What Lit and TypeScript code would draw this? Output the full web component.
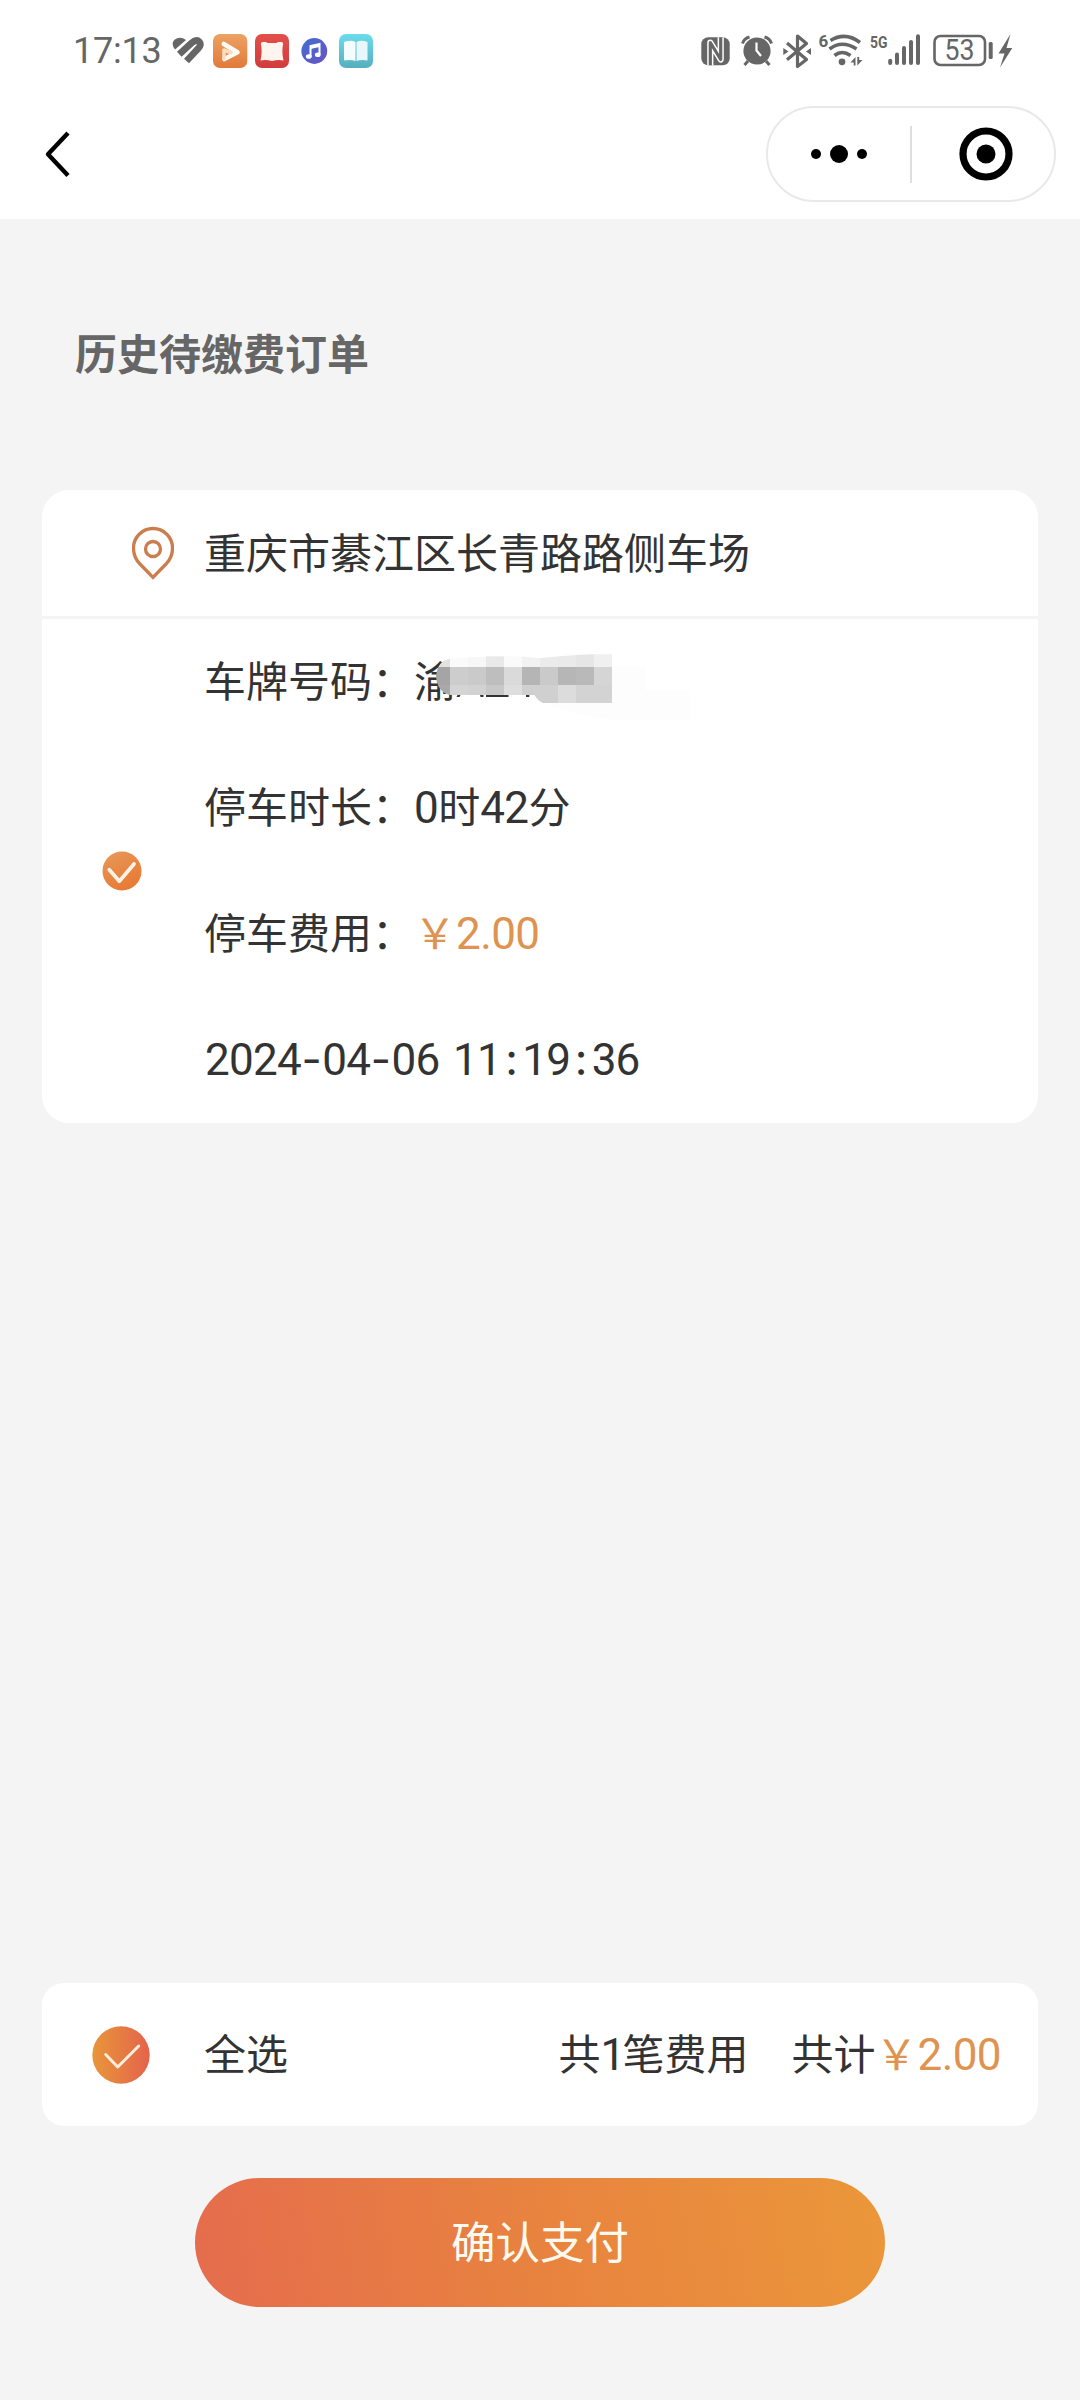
import { LitElement, html, svg, css } from "lit";
import { customElement, property } from "lit/decorators.js";

const MOSAIC = [
  ["#e2e2e2", "#fafafa", "#f7f7f7", "#e9e9e9", "#fafafa", "#f2f2f2", "#ebebeb", "#eaeaea", "#e6e6e6", "#f0f0f0"],
  ["#a5a5a5", "#cdcdcd", "#cacaca", "#bebebe", "#dadada", "#b5b5b5", "#cacaca", "#b6b6b6", "#b9b9b9", "#d5d5d5"],
  ["#a9a9a9", "#d4d4d4", "#d2d2d2", "#c8c8c8", "#dedede", "#d0d0d0", "#d0d0d0", "#dcdcdc", "#d3d3d3", "#d3d3d3"],
];

@customElement("status-bar")
class StatusBar extends LitElement {
  static styles = css`
    :host { display: flex; height: 100px; box-sizing: border-box; padding: 2px 64px 0 73px; align-items: center; justify-content: space-between; color: #666; }
    .side { display: flex; align-items: center; }
    .time { font: 400 36px/36px Roboto, sans-serif; width: 97px; white-space: nowrap; letter-spacing: -0.2px; }
    .num { font: 400 29px Roboto, sans-serif; }
    .mini { font: 700 17px "Liberation Sans Narrow", Roboto, sans-serif; }
    svg { display: block; }
  `;
  render() {
    return html`
      <div class="side">
        <span class="time">17:13</span>
        <svg width="204" height="40" viewBox="170 31 204 40">
          <defs>
            <linearGradient id="o" x2="0" y2="1"><stop stop-color="#eca264" /><stop offset="1" stop-color="#e27a38" /></linearGradient>
            <linearGradient id="r" x2="0" y2="1"><stop stop-color="#e2504c" /><stop offset="1" stop-color="#d23b3a" /></linearGradient>
            <linearGradient id="m" x2="1" y2="1"><stop stop-color="#3f6fd0" /><stop offset="1" stop-color="#6a52c4" /></linearGradient>
            <linearGradient id="c" x2="0" y2="1"><stop stop-color="#6bdcec" /><stop offset="1" stop-color="#56afc0" /></linearGradient>
          </defs>
          <path d="M175 49.500Q170.500 43.500 174.500 39.800Q180 35.500 186 40Z" fill="#666" />
          <path d="M179.300 54.300L191.500 43Q196.500 38.800 199.300 41.800Q202 45 197.800 49L186.500 61" fill="none" stroke="#666" stroke-width="6.800" />
          <rect x="213" y="34" width="34.300" height="34" rx="7" fill="url(#o)" />
          <path d="M223.800 44L237.500 52.200L224.300 59" fill="none" stroke="#fffaf4" stroke-width="4.600" stroke-linejoin="round" stroke-linecap="round" />
          <path d="M224 58.500V50L230.500 52.500" fill="none" stroke="#fbdcc0" stroke-width="3.600" stroke-linejoin="round" stroke-linecap="round" />
          <rect x="255" y="34" width="34" height="34" rx="7" fill="url(#r)" />
          <path d="M261 44.500Q260.500 42 263 42H266L267.500 43H276.500L278 42H281Q283.500 42 283 44.500Q281.500 52 283.500 60.500Q278 59.500 272 61Q266 59.500 260.500 60.500Q262.500 52 261 44.500Z" fill="#fff4ee" />
          <circle cx="314.300" cy="51" r="12.900" fill="url(#m)" />
          <path d="M310.500 56.500V46L319.500 44V54.500" fill="none" stroke="#fff" stroke-width="2" />
          <path d="M310.500 46L319.500 44V47L310.500 49Z" fill="#fff" />
          <ellipse cx="308.800" cy="56.500" rx="2.900" ry="2.300" fill="#fff" /><ellipse cx="317.800" cy="54.800" rx="2.900" ry="2.300" fill="#fff" />
          <rect x="339" y="34" width="34" height="34" rx="7" fill="url(#c)" />
          <path d="M344 42Q351 39.500 355.500 42V61Q351 59.500 344 60.500Z" fill="#f4fcfd" />
          <path d="M367.500 42Q361 39.500 356.500 42V61Q361 59.500 367.500 60.500Z" fill="#e8f8fa" />
        </svg>
      </div>
      <svg width="316" height="40" viewBox="700 31 316 40" fill="#666">
        <rect x="701.300" y="37.200" width="28.400" height="28" rx="7" />
        <path d="M710.300 65.200V42.500L720.700 59.500V37.200" fill="none" stroke="#fff" stroke-width="6.200" stroke-linejoin="round" />
        <path d="M710.300 65.200V42.500L720.700 59.500V37.200" fill="none" stroke="#666" stroke-width="3.200" stroke-linejoin="round" />
        <circle cx="757" cy="51" r="13.600" />
        <path d="M742.500 43.500Q744 38.500 749.500 37M771.500 43.500Q770 38.500 764.500 37M748 61L744.500 65M766 61L769.500 65" fill="none" stroke="#666" stroke-width="3" />
        <path d="M756.500 42.500V50.500L761 56" fill="none" stroke="#fff" stroke-width="2.200" />
        <path d="M787 43L806.500 59.500L797.500 66.500V36L806.500 43.500L787 59.800" fill="none" stroke="#666" stroke-width="3.200" stroke-linejoin="round" />
        <path d="M783.300 48L788.500 51.500L783.300 55ZM811 48L806 51.500L811 55Z" />
        <text class="mini" x="818.500" y="47">6</text>
        <path d="M830.500 40.500Q845.500 31.500 860 42.500M829.500 49Q842 39.500 856.500 49M834.500 55.500Q842 49.500 850.500 55.500" fill="none" stroke="#666" stroke-width="3.600" />
        <circle cx="842" cy="61.800" r="3.400" />
        <path d="M850.500 62.500L855.500 57V65.500H853.700V62.500ZM857.300 57V65.500L862.500 60H859.200V57Z" />
        <text class="mini" x="870" y="48" textLength="17.500" lengthAdjust="spacingAndGlyphs">5G</text>
        <rect x="888.200" y="58.800" width="4" height="6.200" rx="2" /><rect x="895" y="52.500" width="4" height="12.500" rx="2" /><rect x="902" y="46" width="4" height="19" rx="2" /><rect x="909" y="40" width="4" height="25" rx="2" /><rect x="916" y="34.300" width="4" height="30.700" rx="2" />
        <rect x="934.500" y="36" width="50.500" height="29" rx="6" fill="none" stroke="#666" stroke-width="2.600" />
        <text class="num" x="944.500" y="60.300" textLength="30" lengthAdjust="spacingAndGlyphs">53</text>
        <rect x="988.700" y="42" width="4" height="17" rx="1.500" />
        <path d="M1010.500 34L998.500 53.500H1004.500L1000 67.500L1012.300 48H1006.500Z" />
      </svg>
    `;
  }
}

@customElement("nav-header")
class NavHeader extends LitElement {
  static styles = css`
    :host { display: flex; height: 119px; box-sizing: border-box; padding: 6px 24px 17px 44px; align-items: center; justify-content: space-between; }
    .capsule { display: flex; width: 290px; height: 96px; box-sizing: border-box; border: 2px solid #e9e9e9; border-radius: 48px; align-items: center; }
    .half { display: flex; box-sizing: border-box; justify-content: center; align-items: center; }
    .dots { gap: 9px; width: 142px; }
    .ring { width: 142px; padding-left: 5px; }
    .dot { width: 10px; height: 10px; border-radius: 50%; background: #000; }
    .dot.big { width: 18px; height: 18px; }
    .sep { width: 2px; height: 57px; background: #dedede; }
    svg { display: block; }
  `;
  render() {
    return html`
      <svg width="26" height="48" viewBox="44 130 26 48"><path d="M68 133L48 154.300L68 175.500" fill="none" stroke="#000" stroke-width="4.400" stroke-linejoin="round" /></svg>
      <div class="capsule">
        <div class="half dots"><span class="dot"></span><span class="dot big"></span><span class="dot"></span></div>
        <div class="sep"></div>
        <div class="half ring">
          <svg width="54" height="54"><circle cx="27" cy="27" r="23" fill="none" stroke="#000" stroke-width="7.200" /><circle cx="27" cy="27" r="9.500" /></svg>
        </div>
      </div>
    `;
  }
}

@customElement("round-check")
class RoundCheck extends LitElement {
  @property({ type: Boolean }) large = false;
  static styles = css`
    :host { display: block; }
    svg { display: block; }
  `;
  render() {
    return this.large
      ? html`<svg width="58" height="58">
          <defs><linearGradient id="g"><stop stop-color="#e8963a" /><stop offset="1" stop-color="#e4634c" /></linearGradient></defs>
          <circle cx="29" cy="29" r="28.700" fill="url(#g)" />
          <path d="M13.700 28.500L25.700 41L46.700 20" fill="none" stroke="#fdeedd" stroke-width="3" stroke-linecap="round" stroke-linejoin="round" />
        </svg>`
      : html`<svg width="40" height="40">
          <defs><linearGradient id="g" x2=".5" y2="1"><stop stop-color="#e69a5a" /><stop offset="1" stop-color="#e97a36" /></linearGradient></defs>
          <circle cx="20" cy="20" r="19.500" fill="url(#g)" />
          <path d="M7.300 18.700L17.300 30.200L32 13" fill="none" stroke="#fef3e4" stroke-width="3.700" stroke-linecap="round" stroke-linejoin="round" />
        </svg>`;
  }
}

@customElement("app-root")
class AppRoot extends LitElement {
  static styles = css`
    :host { display: flex; flex-direction: column; width: 1080px; height: 2400px; background: #f4f4f4; color: #333; font: 400 42px/1 "Noto Sans CJK SC", sans-serif; }
    .top { background: #fff; }
    .title { margin: 77px 75px 0; font-size: 42px; line-height: 112px; font-weight: 700; color: #666; }
    .card { margin: 82px 42px 0; background: #fff; border-radius: 27px; }
    .place { display: flex; height: 126px; align-items: center; border-bottom: 3px solid #f4f4f4; }
    .place span { padding-bottom: 5px; }
    .pin { display: block; width: 42px; margin: 0 30px 0 90px; }
    .body { display: flex; align-items: center; height: 504px; }
    .body round-check { margin: 0 62px 0 60px; }
    .row { display: flex; height: 126px; box-sizing: border-box; padding-bottom: 6px; align-items: center; white-space: nowrap; line-height: 62px; }
    .row.when { padding-bottom: 1px; }
    .n { font-family: Roboto, sans-serif; font-size: 44px; letter-spacing: -0.6px; line-height: 1; }
    .one { margin-right: -2px; }
    .fee { color: #de9350; }
    .date { word-spacing: 3.500px; letter-spacing: -0.75px; padding-left: 1px; }
    .s { display: inline-block; width: 21.300px; text-align: center; font-family: Inter, sans-serif; letter-spacing: 0; font-size: 44px; }
    .plate { position: relative; }
    .mask { position: absolute; left: 16px; top: 3px; }
    .grow { flex: 1; }
    .total { display: flex; align-items: center; height: 143px; margin: 0 42px; background: #fff; border-radius: 22px; line-height: 62px; white-space: nowrap; }
    .total span { padding-bottom: 5px; }
    .total round-check { margin: 0 54px 0 50px; }
    .total .sum { margin-left: 43px; margin-right: 37px; }
    .pay { align-self: center; width: 690px; height: 129px; margin: 52px 0 93px; padding: 0 0 6px; border: 0; border-radius: 65px; background: linear-gradient(80deg, #e56c4d, #e8833f 50%, #eb973a); color: #fffaf0; font: 400 44.500px/123px "Noto Sans CJK SC", sans-serif; }
  `;
  mosaic() {
    return html`<svg class="mask" width="260" height="70" viewBox="430 650 260 70">
      <defs><clipPath id="shape"><path d="M436 675Q438 659 450 658Q490 653 540 657Q575 654 590 653.300H612V702H543Q538 700 534.500 694H450Q437 691 436 675Z" /></clipPath></defs>
      <path d="M612 665H645V689H690V719H612Q560 712 536 696H612Z" fill="#fdfdfd" />
      <g fill="#333"><path d="M457.500 694h3l-1 2h-3zM480 694h3.500v2h-3zM486 694h22.500v2H486zM526 694h3.300v2H526z" /></g>
      <g clip-path="url(#shape)" shape-rendering="crispEdges">
        ${MOSAIC.map((r, j) => r.map((c, i) => svg`<rect x=${432 + i * 18} y=${648 + j * 18} width="18" height="18" fill=${c} />`))}
      </g>
    </svg>`;
  }
  seps(t: string) {
    return t.split(/([-:])/).map((p) => (p === "-" || p === ":" ? html`<span class="s">${p}</span>` : p));
  }
  render() {
    return html`
      <div class="top"><status-bar></status-bar><nav-header></nav-header></div>
      <div class="title">历史待缴费订单</div>
      <section class="card">
        <div class="place">
          <svg class="pin" height="54" viewBox="132 526 42 54" fill="none" stroke="#cb7d4e" stroke-width="3.300">
            <path d="M153 577.300L139.500 563.500Q133.500 557 133.500 548A19.500 19.500 0 0 1 172.500 548Q172.500 557 166.500 563.500Z" />
            <circle cx="153" cy="549" r="7.500" />
          </svg>
          <span>重庆市綦江区长青路路侧车场</span>
        </div>
        <div class="body">
          <round-check></round-check>
          <div>
            <div class="row"><span>车牌号码：</span><span class="plate">渝${this.mosaic()}</span></div>
            <div class="row"><span>停车时长：<span class="n">0</span>时<span class="n">42</span>分</span></div>
            <div class="row"><span>停车费用：<span class="fee">￥<span class="n">2.00</span></span></span></div>
            <div class="row when"><span class="n date">${this.seps("2024-04-06 11:19:36")}</span></div>
          </div>
        </div>
      </section>
      <div class="grow"></div>
      <section class="total">
        <round-check large></round-check>
        <span>全选</span>
        <div class="grow"></div>
        <span>共<span class="n one">1</span>笔费用</span>
        <span class="sum">共计<span class="fee">￥<span class="n">2.00</span></span></span>
      </section>
      <button class="pay">确认支付</button>
    `;
  }
}
